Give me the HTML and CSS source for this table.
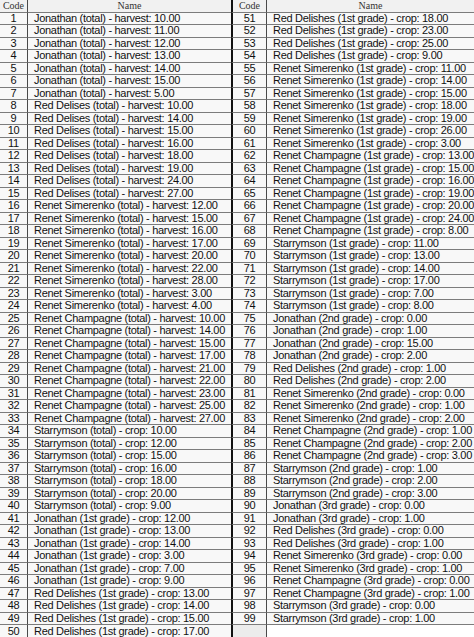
FILE: index.html
```html
<!DOCTYPE html>
<html>
<head>
<meta charset="utf-8">
<link rel="stylesheet" href="styles.css">
</head>
<body>
<table class="codes">
<colgroup><col class="c-code"><col class="c-name"><col class="c-code2"><col class="c-name2"></colgroup>
<thead>
<tr><th class="code">Code</th><th class="name">Name</th><th class="code split">Code</th><th class="name">Name</th></tr>
</thead>
<tbody>
<tr><td class="code">1</td><td class="name">Jonathan (total) - harvest: 10.00</td><td class="code split">51</td><td class="name">Red Delishes (1st grade) - crop: 18.00</td></tr>
<tr><td class="code">2</td><td class="name">Jonathan (total) - harvest: 11.00</td><td class="code split">52</td><td class="name">Red Delishes (1st grade) - crop: 23.00</td></tr>
<tr><td class="code">3</td><td class="name">Jonathan (total) - harvest: 12.00</td><td class="code split">53</td><td class="name">Red Delishes (1st grade) - crop: 25.00</td></tr>
<tr><td class="code">4</td><td class="name">Jonathan (total) - harvest: 13.00</td><td class="code split">54</td><td class="name">Red Delishes (1st grade) - crop: 9.00</td></tr>
<tr><td class="code">5</td><td class="name">Jonathan (total) - harvest: 14.00</td><td class="code split">55</td><td class="name">Renet Simerenko (1st grade) - crop: 11.00</td></tr>
<tr><td class="code">6</td><td class="name">Jonathan (total) - harvest: 15.00</td><td class="code split">56</td><td class="name">Renet Simerenko (1st grade) - crop: 14.00</td></tr>
<tr><td class="code">7</td><td class="name">Jonathan (total) - harvest: 5.00</td><td class="code split">57</td><td class="name">Renet Simerenko (1st grade) - crop: 15.00</td></tr>
<tr><td class="code">8</td><td class="name">Red Delises (total) - harvest: 10.00</td><td class="code split">58</td><td class="name">Renet Simerenko (1st grade) - crop: 18.00</td></tr>
<tr><td class="code">9</td><td class="name">Red Delises (total) - harvest: 14.00</td><td class="code split">59</td><td class="name">Renet Simerenko (1st grade) - crop: 19.00</td></tr>
<tr><td class="code">10</td><td class="name">Red Delises (total) - harvest: 15.00</td><td class="code split">60</td><td class="name">Renet Simerenko (1st grade) - crop: 26.00</td></tr>
<tr><td class="code">11</td><td class="name">Red Delises (total) - harvest: 16.00</td><td class="code split">61</td><td class="name">Renet Simerenko (1st grade) - crop: 3.00</td></tr>
<tr><td class="code">12</td><td class="name">Red Delises (total) - harvest: 18.00</td><td class="code split">62</td><td class="name">Renet Champagne (1st grade) - crop: 13.00</td></tr>
<tr><td class="code">13</td><td class="name">Red Delises (total) - harvest: 19.00</td><td class="code split">63</td><td class="name">Renet Champagne (1st grade) - crop: 15.00</td></tr>
<tr><td class="code">14</td><td class="name">Red Delises (total) - harvest: 24.00</td><td class="code split">64</td><td class="name">Renet Champagne (1st grade) - crop: 16.00</td></tr>
<tr><td class="code">15</td><td class="name">Red Delises (total) - harvest: 27.00</td><td class="code split">65</td><td class="name">Renet Champagne (1st grade) - crop: 19.00</td></tr>
<tr><td class="code">16</td><td class="name">Renet Simerenko (total) - harvest: 12.00</td><td class="code split">66</td><td class="name">Renet Champagne (1st grade) - crop: 20.00</td></tr>
<tr><td class="code">17</td><td class="name">Renet Simerenko (total) - harvest: 15.00</td><td class="code split">67</td><td class="name">Renet Champagne (1st grade) - crop: 24.00</td></tr>
<tr><td class="code">18</td><td class="name">Renet Simerenko (total) - harvest: 16.00</td><td class="code split">68</td><td class="name">Renet Champagne (1st grade) - crop: 8.00</td></tr>
<tr><td class="code">19</td><td class="name">Renet Simerenko (total) - harvest: 17.00</td><td class="code split">69</td><td class="name">Starrymson (1st grade) - crop: 11.00</td></tr>
<tr><td class="code">20</td><td class="name">Renet Simerenko (total) - harvest: 20.00</td><td class="code split">70</td><td class="name">Starrymson (1st grade) - crop: 13.00</td></tr>
<tr><td class="code">21</td><td class="name">Renet Simerenko (total) - harvest: 22.00</td><td class="code split">71</td><td class="name">Starrymson (1st grade) - crop: 14.00</td></tr>
<tr><td class="code">22</td><td class="name">Renet Simerenko (total) - harvest: 28.00</td><td class="code split">72</td><td class="name">Starrymson (1st grade) - crop: 17.00</td></tr>
<tr><td class="code">23</td><td class="name">Renet Simerenko (total) - harvest: 3.00</td><td class="code split">73</td><td class="name">Starrymson (1st grade) - crop: 7.00</td></tr>
<tr><td class="code">24</td><td class="name">Renet Simerenko (total) - harvest: 4.00</td><td class="code split">74</td><td class="name">Starrymson (1st grade) - crop: 8.00</td></tr>
<tr><td class="code">25</td><td class="name">Renet Champagne (total) - harvest: 10.00</td><td class="code split">75</td><td class="name">Jonathan (2nd grade) - crop: 0.00</td></tr>
<tr><td class="code">26</td><td class="name">Renet Champagne (total) - harvest: 14.00</td><td class="code split">76</td><td class="name">Jonathan (2nd grade) - crop: 1.00</td></tr>
<tr><td class="code">27</td><td class="name">Renet Champagne (total) - harvest: 15.00</td><td class="code split">77</td><td class="name">Jonathan (2nd grade) - crop: 15.00</td></tr>
<tr><td class="code">28</td><td class="name">Renet Champagne (total) - harvest: 17.00</td><td class="code split">78</td><td class="name">Jonathan (2nd grade) - crop: 2.00</td></tr>
<tr><td class="code">29</td><td class="name">Renet Champagne (total) - harvest: 21.00</td><td class="code split">79</td><td class="name">Red Delishes (2nd grade) - crop: 1.00</td></tr>
<tr><td class="code">30</td><td class="name">Renet Champagne (total) - harvest: 22.00</td><td class="code split">80</td><td class="name">Red Delishes (2nd grade) - crop: 2.00</td></tr>
<tr><td class="code">31</td><td class="name">Renet Champagne (total) - harvest: 23.00</td><td class="code split">81</td><td class="name">Renet Simerenko (2nd grade) - crop: 0.00</td></tr>
<tr><td class="code">32</td><td class="name">Renet Champagne (total) - harvest: 25.00</td><td class="code split">82</td><td class="name">Renet Simerenko (2nd grade) - crop: 1.00</td></tr>
<tr><td class="code">33</td><td class="name">Renet Champagne (total) - harvest: 27.00</td><td class="code split">83</td><td class="name">Renet Simerenko (2nd grade) - crop: 2.00</td></tr>
<tr><td class="code">34</td><td class="name">Starrymson (total) - crop: 10.00</td><td class="code split">84</td><td class="name">Renet Champagne (2nd grade) - crop: 1.00</td></tr>
<tr><td class="code">35</td><td class="name">Starrymson (total) - crop: 12.00</td><td class="code split">85</td><td class="name">Renet Champagne (2nd grade) - crop: 2.00</td></tr>
<tr><td class="code">36</td><td class="name">Starrymson (total) - crop: 15.00</td><td class="code split">86</td><td class="name">Renet Champagne (2nd grade) - crop: 3.00</td></tr>
<tr><td class="code">37</td><td class="name">Starrymson (total) - crop: 16.00</td><td class="code split">87</td><td class="name">Starrymson (2nd grade) - crop: 1.00</td></tr>
<tr><td class="code">38</td><td class="name">Starrymson (total) - crop: 18.00</td><td class="code split">88</td><td class="name">Starrymson (2nd grade) - crop: 2.00</td></tr>
<tr><td class="code">39</td><td class="name">Starrymson (total) - crop: 20.00</td><td class="code split">89</td><td class="name">Starrymson (2nd grade) - crop: 3.00</td></tr>
<tr><td class="code">40</td><td class="name">Starrymson (total) - crop: 9.00</td><td class="code split">90</td><td class="name">Jonathan (3rd grade) - crop: 0.00</td></tr>
<tr><td class="code">41</td><td class="name">Jonathan (1st grade) - crop: 12.00</td><td class="code split">91</td><td class="name">Jonathan (3rd grade) - crop: 1.00</td></tr>
<tr><td class="code">42</td><td class="name">Jonathan (1st grade) - crop: 13.00</td><td class="code split">92</td><td class="name">Red Delishes (3rd grade) - crop: 0.00</td></tr>
<tr><td class="code">43</td><td class="name">Jonathan (1st grade) - crop: 14.00</td><td class="code split">93</td><td class="name">Red Delishes (3rd grade) - crop: 1.00</td></tr>
<tr><td class="code">44</td><td class="name">Jonathan (1st grade) - crop: 3.00</td><td class="code split">94</td><td class="name">Renet Simerenko (3rd grade) - crop: 0.00</td></tr>
<tr><td class="code">45</td><td class="name">Jonathan (1st grade) - crop: 7.00</td><td class="code split">95</td><td class="name">Renet Simerenko (3rd grade) - crop: 1.00</td></tr>
<tr><td class="code">46</td><td class="name">Jonathan (1st grade) - crop: 9.00</td><td class="code split">96</td><td class="name">Renet Champagne (3rd grade) - crop: 0.00</td></tr>
<tr><td class="code">47</td><td class="name">Red Delishes (1st grade) - crop: 13.00</td><td class="code split">97</td><td class="name">Renet Champagne (3rd grade) - crop: 1.00</td></tr>
<tr><td class="code">48</td><td class="name">Red Delishes (1st grade) - crop: 14.00</td><td class="code split">98</td><td class="name">Starrymson (3rd grade) - crop: 0.00</td></tr>
<tr><td class="code">49</td><td class="name">Red Delishes (1st grade) - crop: 15.00</td><td class="code split">99</td><td class="name">Starrymson (3rd grade) - crop: 1.00</td></tr>
<tr class="last"><td class="code">50</td><td class="name">Red Delishes (1st grade) - crop: 17.00</td><td class="code split empty"></td><td class="name empty"></td></tr>
</tbody>
</table>
</body>
</html>
```

FILE: styles.css
```css
html, body {
  margin: 0;
  padding: 0;
  background: #ffffff;
}

.codes {
  width: 474px;
  table-layout: fixed;
  border-collapse: separate;
  border-spacing: 0;
  font-family: "Liberation Sans", Arial, sans-serif;
  font-size: 11px;
  letter-spacing: -0.3px;
  color: #111111;
}

.c-code { width: 28px; }
.c-name { width: 203px; }
.c-code2 { width: 36px; }
.c-name2 { width: 207px; }

.codes tr {
  height: 12.5px;
}

.codes th,
.codes td {
  padding: 0;
  line-height: 11px;
  white-space: nowrap;
  overflow: hidden;
  border-bottom: 1px solid #7c7c7c;
  background: #f8f8f8;
  vertical-align: middle;
}

.codes th {
  font-family: "Liberation Serif", "Times New Roman", serif;
  font-weight: normal;
  font-size: 10px;
  letter-spacing: 0;
  color: #333333;
  background: #f1f1f1;
  text-align: center;
}

.codes .code {
  text-align: center;
  border-right: 1px solid #4a4a4a;
}

.codes td.name {
  padding-left: 6px;
  text-align: left;
}

.codes .split {
  border-left: 2px solid #111111;
}

.codes .last td {
  border-bottom: none;
}

.codes td.code.empty {
  background: #ececec;
}

.codes td.name.empty {
  background: #ffffff;
}
```
